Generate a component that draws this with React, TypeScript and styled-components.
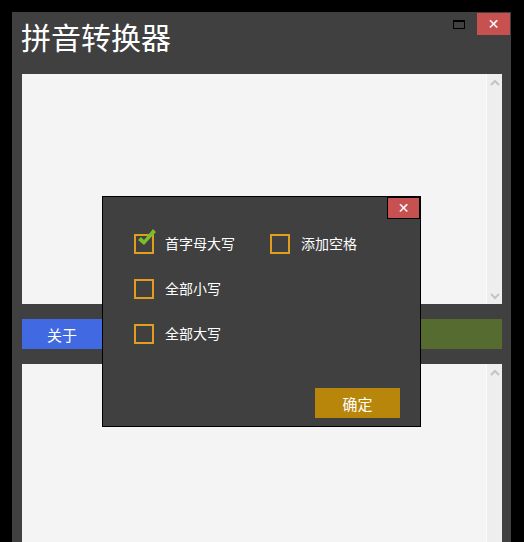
import { FC } from "react";
import styled, { createGlobalStyle } from "styled-components";

const GlobalStyle = createGlobalStyle`
  html, body {
    margin: 0;
    padding: 0;
    background: #000;
    overflow: hidden;
  }
  body {
    font-family: "Noto Sans CJK SC", "Noto Sans", sans-serif;
  }
`;

// main window
const Window = styled.div`
  position: relative;
  margin: 12px 0 0 12px;
  width: 499px;
  height: 530px;
  background: #404040;
  display: flex;
  flex-direction: column;
  overflow: hidden;
`;

const TitleBar = styled.div`
  display: flex;
  justify-content: space-between;
  align-items: flex-start;
  height: 62px;
  flex-shrink: 0;
`;

const Title = styled.div`
  margin: 4px 0 0 9px;
  font-size: 30px;
  line-height: 40px;
  color: #fff;
`;

const Controls = styled.div`
  display: flex;
  align-items: flex-start;
  gap: 12px;
  padding: 1px 1px 0 0;
`;

const MaxIcon = styled.div`
  margin-top: 7px;
  width: 10px;
  height: 6px;
  border: 1px solid #000;
  border-top-width: 2px;
`;

const CloseButton = styled.div<{ $bordered?: boolean }>`
  width: 33px;
  height: 22px;
  box-sizing: border-box;
  background: #c75050;
  color: #fff;
  font-family: "DejaVu Sans", sans-serif;
  font-size: 14px;
  font-weight: bold;
  display: flex;
  align-items: center;
  justify-content: center;
  border: ${(p) => (p.$bordered ? "1px solid #000" : "none")};
`;

const Body = styled.div`
  flex: 1;
  display: flex;
  flex-direction: column;
  gap: 15px;
  padding: 0 9px 0 10px;
`;

const TextArea = styled.div<{ $height: number }>`
  display: flex;
  height: ${(p) => p.$height}px;
  flex-shrink: 0;
  background: #f4f4f4;
`;

const TextContent = styled.div`
  flex: 1;
`;

const ScrollBar = styled.div`
  width: 15px;
  border-left: 1px solid #fbfbfb;
  background: #eeeeee;
  display: flex;
  flex-direction: column;
  justify-content: space-between;
  align-items: center;
  padding: 5px 0 4px;
`;

const ButtonRow = styled.div`
  display: flex;
  gap: 16px;
  height: 30px;
  flex-shrink: 0;
`;

const ActionButton = styled.div<{ $color: string; $grow?: boolean }>`
  width: 80px;
  flex: ${(p) => (p.$grow ? "1" : "none")};
  background: ${(p) => p.$color};
  color: #fff;
  font-size: 15px;
  display: flex;
  align-items: center;
  justify-content: center;
`;

// options dialog
const Dialog = styled.div`
  position: absolute;
  left: 90px;
  top: 184px;
  width: 319px;
  height: 231px;
  box-sizing: border-box;
  background: #404040;
  border: 1px solid #000;
  display: flex;
  flex-direction: column;
  padding: 37px 20px 8px 31px;
`;

const DialogClose = styled(CloseButton)`
  position: absolute;
  top: 0;
  right: 0;
`;

const Options = styled.div`
  display: grid;
  grid-template-columns: 136px auto;
  row-gap: 25px;
`;

const Option = styled.label`
  display: flex;
  align-items: center;
  gap: 11px;
  height: 20px;
  color: #fff;
  font-size: 14px;
`;

const OptionText = styled.span`
  margin-bottom: 3px;
`;

const Box = styled.span`
  position: relative;
  width: 16px;
  height: 16px;
  border: 2px solid #e09d1e;
  flex-shrink: 0;
`;

const Check = styled.svg`
  position: absolute;
  left: 2px;
  top: -7px;
`;

const Confirm = styled.div`
  margin-top: auto;
  align-self: flex-end;
  width: 85px;
  height: 30px;
  background: #b8860b;
  color: #fff;
  font-size: 15px;
  display: flex;
  align-items: center;
  justify-content: center;
`;

const Chevron: FC<{ up?: boolean }> = ({ up }) => (
  <svg width="10" height="7" viewBox="0 0 10 7">
    <path
      d={up ? "M1 6 L5 2 L9 6" : "M1 1 L5 5 L9 1"}
      fill="none"
      stroke="#c4c4c4"
      strokeWidth="2"
    />
  </svg>
);

const CheckBox: FC<{ label: string; checked?: boolean }> = ({ label, checked }) => (
  <Option>
    <Box>
      {checked && (
        <Check width="20" height="20" viewBox="0 0 20 20">
          <path d="M0 11 L3 8 L6 11 L15 0 L18 3 L6 16 Z" fill="#7cbd2a" />
        </Check>
      )}
    </Box>
    <OptionText>{label}</OptionText>
  </Option>
);

const App: FC = () => {
  return (
    <>
      <GlobalStyle />
      <Window>
        <TitleBar>
          <Title>拼音转换器</Title>
          <Controls>
            <MaxIcon />
            <CloseButton>✕</CloseButton>
          </Controls>
        </TitleBar>
        <Body>
          <TextArea $height={230}>
            <TextContent />
            <ScrollBar>
              <Chevron up />
              <Chevron />
            </ScrollBar>
          </TextArea>
          <ButtonRow>
            <ActionButton $color="#4169e1">关于</ActionButton>
            <ActionButton $color="#556b2f" $grow>转换</ActionButton>
          </ButtonRow>
          <TextArea $height={220}>
            <TextContent />
            <ScrollBar>
              <Chevron up />
              <Chevron />
            </ScrollBar>
          </TextArea>
        </Body>
        <Dialog>
          <DialogClose $bordered>✕</DialogClose>
          <Options>
            <CheckBox label="首字母大写" checked />
            <CheckBox label="添加空格" />
            <CheckBox label="全部小写" />
            <span />
            <CheckBox label="全部大写" />
          </Options>
          <Confirm>确定</Confirm>
        </Dialog>
      </Window>
    </>
  );
};

export default App;
